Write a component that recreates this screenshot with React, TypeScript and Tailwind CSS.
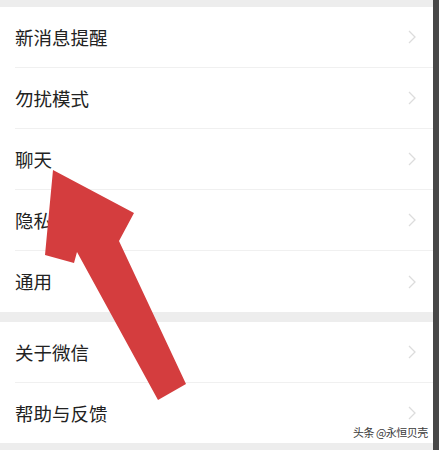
import React from "react";

const font = { fontFamily: '"Noto Sans CJK SC", "Noto Sans", sans-serif' };

function Chevron() {
  return (
    <svg width="8" height="14" viewBox="0 0 8 14" className="shrink-0">
      <path d="M1 1 L7 7 L1 13" fill="none" stroke="#dcdcdc" strokeWidth="1.3" />
    </svg>
  );
}

function Row({ label, divider, h }: { label: string; divider: boolean; h: string }) {
  return (
    <div className={`flex items-stretch pl-[15px] bg-white ${h}`}>
      <div className={`flex flex-1 items-center justify-between pr-[17px] ${divider ? "border-b border-[#f0f0f0]" : ""}`}>
        <span className="text-[18.5px] text-[#222222] leading-none">{label}</span>
        <Chevron />
      </div>
    </div>
  );
}

export default function App() {
  return (
    <div className="relative w-[439px] h-[450px] overflow-hidden flex bg-[#ededed]" style={font}>
      <div className="flex flex-col w-[433px] h-full">
        <div className="h-[7px] bg-[#ededed]" />
        <Row label="新消息提醒" divider h="h-[61px]" />
        <Row label="勿扰模式" divider h="h-[61px]" />
        <Row label="聊天" divider h="h-[61px]" />
        <Row label="隐私" divider h="h-[61px]" />
        <Row label="通用" divider={false} h="h-[61px]" />
        <div className="h-[10px] bg-[#ededed]" />
        <Row label="关于微信" divider h="h-[61px]" />
        <Row label="帮助与反馈" divider={false} h="h-[60px]" />
        <div className="flex-1 bg-[#ededed]" />
      </div>
      <div className="w-[6px] h-full bg-[#474747]" />
      <svg className="absolute left-0 top-0" width="439" height="450" viewBox="0 0 439 450">
        <polygon
          points="53,170 134,213 119,241 186,384 158,400 77,252 74,263 45,255"
          fill="#d43d3e"
        />
      </svg>
      <div
        className="absolute left-[353px] top-[427px] text-[11px] leading-none tracking-[-0.5px] text-[#3a3a3a]"
        style={{ textShadow: "0 0 2px #fff, 0 0 2px #fff" }}
      >
        头条 @永恒贝壳
      </div>
    </div>
  );
}
